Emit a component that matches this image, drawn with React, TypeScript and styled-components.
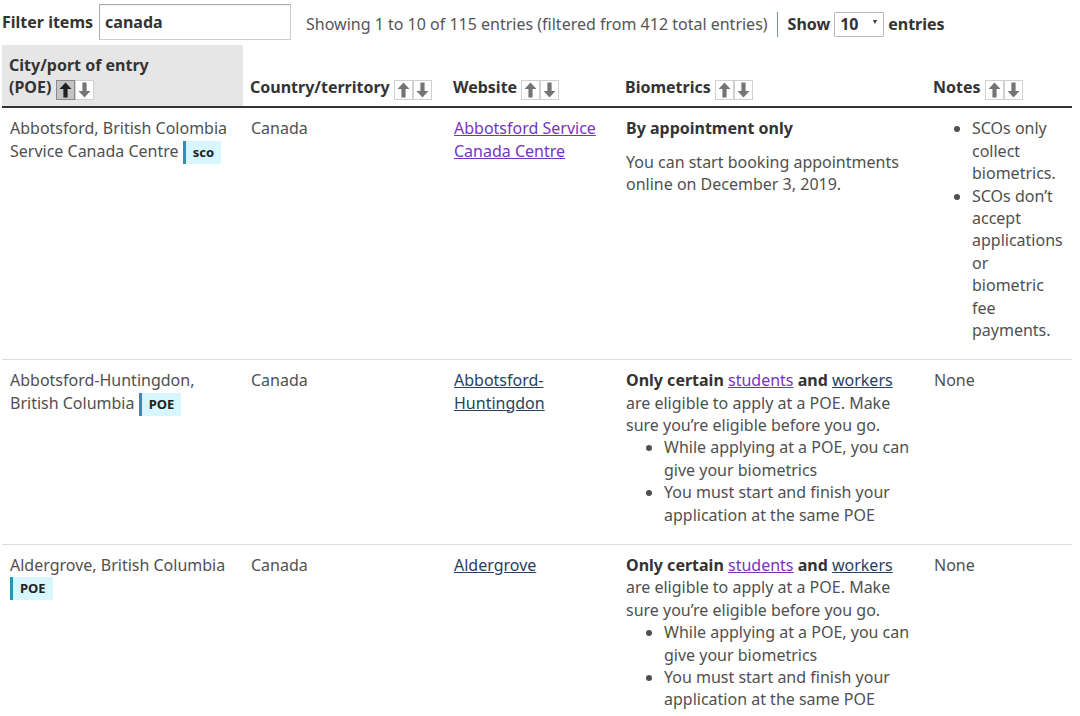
import React from "react"
import styled, { createGlobalStyle } from "styled-components"

const GlobalStyle = createGlobalStyle`
  body {
    margin: 0;
    background: #fff;
    font-family: "Noto Sans", "Open Sans", sans-serif;
    font-size: 16px;
    line-height: 1.4;
    color: #333;
  }
`

type Row = {
  city: string
  badge: string
  country: string
  link: string
  visited?: boolean
  bio: "appointment" | "poe"
  notes: string[] | null
}

const rows: Row[] = [
  {
    city: "Abbotsford, British Colombia Service Canada Centre",
    badge: "sco",
    country: "Canada",
    link: "Abbotsford Service Canada Centre",
    visited: true,
    bio: "appointment",
    notes: [
      "SCOs only collect biometrics.",
      "SCOs don’t accept applications or biometric fee payments."
    ]
  },
  {
    city: "Abbotsford-Huntingdon, British Columbia",
    badge: "POE",
    country: "Canada",
    link: "Abbotsford-Huntingdon",
    bio: "poe",
    notes: null
  },
  {
    city: "Aldergrove, British Columbia",
    badge: "POE",
    country: "Canada",
    link: "Aldergrove",
    bio: "poe",
    notes: null
  }
]

const columns = [
  { label: "City/port of entry (POE)", width: 241, sorted: true },
  { label: "Country/territory", width: 203 },
  { label: "Website", width: 172 },
  { label: "Biometrics", width: 308 },
  { label: "Notes", width: 146 }
]

function Arrow({ dir }: { dir: "up" | "down" }) {
  return (
    <svg width="13" height="16" viewBox="0 0 13 16">
      <path
        d="M6.5 0.5 L12.5 7 L8.6 7 L8.6 15.5 L4.4 15.5 L4.4 7 L0.5 7 Z"
        fill="currentColor"
        transform={dir === "down" ? "rotate(180 6.5 8)" : undefined}
      />
    </svg>
  )
}

function SortButtons({ active }: { active?: boolean }) {
  return (
    <Sorts>
      <SortBtn $active={active}>
        <Arrow dir="up" />
      </SortBtn>
      <SortBtn>
        <Arrow dir="down" />
      </SortBtn>
    </Sorts>
  )
}

// keep the last word of a heading together with its sort buttons
function HeaderLabel({ label, sorted }: { label: string; sorted?: boolean }) {
  const words = label.split(" ")
  const last = words.pop()
  return (
    <>
      {words.length > 0 && `${words.join(" ")} `}
      <NoWrap>
        {last} <SortButtons active={sorted} />
      </NoWrap>
    </>
  )
}

function Biometrics({ kind }: { kind: Row["bio"] }) {
  if (kind === "appointment") {
    return (
      <>
        <Para>
          <strong>By appointment only</strong>
        </Para>
        <Para>You can start booking appointments online on December 3, 2019.</Para>
      </>
    )
  }
  return (
    <>
      <div>
        <strong>Only certain</strong> <Link $visited>students</Link> <strong>and</strong>{" "}
        <Link>workers</Link> are eligible to apply at a POE. Make sure you’re eligible before you go.
      </div>
      <List>
        <li>While applying at a POE, you can give your biometrics</li>
        <li>You must start and finish your application at the same POE</li>
      </List>
    </>
  )
}

export default function App() {
  return (
    <Page>
      <GlobalStyle />
      <TopBar>
        <FilterLabel>Filter items</FilterLabel>
        <FilterInput>canada</FilterInput>
        <Info>Showing 1 to 10 of 115 entries (filtered from 412 total entries)</Info>
        <Length>
          Show
          <Select>
            <span>10</span>
            <Caret />
          </Select>
          entries
        </Length>
      </TopBar>
      <Table>
        <colgroup>
          {columns.map((c) => (
            <col key={c.label} style={{ width: c.width }} />
          ))}
        </colgroup>
        <thead>
          <tr>
            {columns.map((c) => (
              <Th key={c.label} $sorted={c.sorted}>
                <HeaderLabel label={c.label} sorted={c.sorted} />
              </Th>
            ))}
          </tr>
        </thead>
        <tbody>
          {rows.map((r) => (
            <tr key={r.link}>
              <Td>
                {r.city} <Badge>{r.badge}</Badge>
              </Td>
              <Td>{r.country}</Td>
              <Td>
                <Link $visited={r.visited}>{r.link}</Link>
              </Td>
              <Td>
                <Biometrics kind={r.bio} />
              </Td>
              <Td>
                {r.notes ? (
                  <List>
                    {r.notes.map((n) => (
                      <li key={n}>{n}</li>
                    ))}
                  </List>
                ) : (
                  "None"
                )}
              </Td>
            </tr>
          ))}
        </tbody>
      </Table>
    </Page>
  )
}

const Page = styled.div`
  padding-left: 2px;
  width: 1070px;
`

const TopBar = styled.div`
  display: flex;
  align-items: center;
  height: 45px;
`

const FilterLabel = styled.span`
  font-weight: bold;
  margin-right: 6px;
`

const FilterInput = styled.div`
  box-sizing: border-box;
  display: flex;
  align-items: center;
  width: 192px;
  height: 36px;
  padding: 0 5px;
  border: 1px solid #ccc;
  border-top-color: #aaa;
  border-left-color: #aaa;
  box-shadow: inset 0 1px 1px rgba(0, 0, 0, 0.06);
  font-weight: bold;
  color: #333;
  margin-top: -1px;
`

const Info = styled.span`
  margin-left: 15px;
  margin-top: 3px;
  color: #555;
`

const Length = styled.span`
  display: flex;
  align-items: center;
  gap: 4px;
  margin-left: 9px;
  margin-top: 3px;
  padding-left: 10px;
  border-left: 1px solid #7391b3;
  line-height: 18px;
  font-weight: bold;
  color: #333;
`

const Select = styled.span`
  box-sizing: border-box;
  display: flex;
  align-items: center;
  justify-content: space-between;
  width: 50px;
  height: 25px;
  padding: 0 6px 0 5px;
  border: 1px solid #bbb;
  border-radius: 1px;
  background: #fff;
  font-weight: bold;
`

const Caret = styled.span`
  width: 0;
  height: 0;
  border-left: 2.5px solid transparent;
  border-right: 2.5px solid transparent;
  border-top: 4px solid #333;
  margin-bottom: 4px;
`

const Table = styled.table`
  width: 1070px;
  table-layout: fixed;
  border-collapse: collapse;
`

const Th = styled.th<{ $sorted?: boolean }>`
  text-align: left;
  vertical-align: bottom;
  padding: 9px 7px 6px;
  font-weight: bold;
  color: #333;
  background: ${(p) => (p.$sorted ? "#e6e6e6" : "transparent")};
  border-bottom: 2px solid #333;
`

const NoWrap = styled.span`
  white-space: nowrap;
`

const Sorts = styled.span`
  display: inline-flex;
  vertical-align: -5px;
`

const SortBtn = styled.span<{ $active?: boolean }>`
  box-sizing: border-box;
  display: inline-flex;
  align-items: center;
  justify-content: center;
  width: 19px;
  height: 20px;
  border: 1px solid ${(p) => (p.$active ? "#8a8a8a" : "#d0d0d0")};
  background: ${(p) => (p.$active ? "#c4c4c4" : "#fff")};
  color: ${(p) => (p.$active ? "#1f1f1f" : "#757575")};
`

const Td = styled.td`
  vertical-align: top;
  padding: 9px 8px 7px;
  border-bottom: 1px solid #ddd;
  color: #505050;

  strong {
    color: #333;
  }
`

const Badge = styled.span`
  display: inline-block;
  padding: 2px 7px 3px 7px;
  border-left: 3px solid #2f8fb8;
  background: #d7f6fd;
  font-size: 13px;
  font-weight: bold;
  line-height: 18px;
  color: #222;
`

const Link = styled.a<{ $visited?: boolean }>`
  color: ${(p) => (p.$visited ? "#7834bc" : "#284162")};
  text-decoration: underline;
  cursor: pointer;
`

const Para = styled.p`
  margin: 0 0 11px;
`

const List = styled.ul`
  margin: 0 0 11px;
  padding-left: 38px;
`
